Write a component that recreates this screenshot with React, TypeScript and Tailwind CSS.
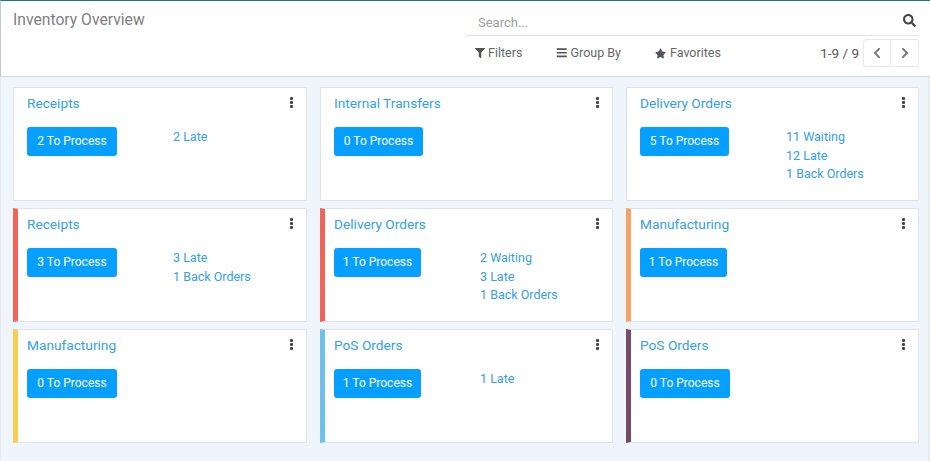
import React from "react";
import { FaFilter, FaBars, FaStar, FaSearch, FaChevronLeft, FaChevronRight } from "react-icons/fa";

const font = "font-['Roboto',sans-serif]";

const cards = [
  { title: "Receipts", button: "2 To Process", width: "w-[90px]", links: ["2 Late"], border: "" },
  { title: "Internal Transfers", button: "0 To Process", width: "w-[89px]", links: [], border: "" },
  { title: "Delivery Orders", button: "5 To Process", width: "w-[89px]", links: ["11 Waiting", "12 Late", "1 Back Orders"], border: "" },
  { title: "Receipts", button: "3 To Process", width: "w-[90px]", links: ["3 Late", "1 Back Orders"], border: "border-l-[#f0645a]" },
  { title: "Delivery Orders", button: "1 To Process", width: "w-[87px]", links: ["2 Waiting", "3 Late", "1 Back Orders"], border: "border-l-[#f0645a]" },
  { title: "Manufacturing", button: "1 To Process", width: "w-[87px]", links: [], border: "border-l-[#f4a460]" },
  { title: "Manufacturing", button: "0 To Process", width: "w-[90px]", links: [], border: "border-l-[#f7cd4f]" },
  { title: "PoS Orders", button: "1 To Process", width: "w-[87px]", links: ["1 Late"], border: "border-l-[#6cc1ed]" },
  { title: "PoS Orders", button: "0 To Process", width: "w-[90px]", links: [], border: "border-l-[#744a69]" },
];

const Kebab = () => (
  <div className="flex flex-col gap-[1px] w-[3.5px]">
    <span className="w-[3.5px] h-[3px] rounded-[1px] bg-[#444]"></span>
    <span className="w-[3.5px] h-[3px] rounded-[1px] bg-[#444]"></span>
    <span className="w-[3.5px] h-[3px] rounded-[1px] bg-[#444]"></span>
  </div>
);

const Card = ({ title, button, width, links, border }: any) => (
  <div
    className={`h-[114px] bg-white border border-[#dfe4ea] pr-[13px] pt-[9px] ${
      border ? `border-l-[5px] pl-[9px] ${border}` : "pl-[13px]"
    }`}
  >
    <div className="flex items-start justify-between h-[16px]">
      <div className="text-[13.7px] leading-[16px] -mt-[2px] text-[#35a0e4]">{title}</div>
      <Kebab />
    </div>
    <div className="flex mt-[14px]">
      <div className="w-[146px]">
        <button className={`h-[29px] ${width} rounded-[3px] bg-[#05a0ff] text-white text-[12px] leading-[29px] text-center`}>
          {button}
        </button>
      </div>
      <div className="flex flex-col text-[12.5px] leading-[18.5px] text-[#35a0e4] pt-[1px]">
        {links.map((l: string) => (
          <div key={l}>{l}</div>
        ))}
      </div>
    </div>
  </div>
);

export default function App() {
  return (
    <div className={`w-[930px] h-[461px] overflow-hidden bg-[#f0f5fb] ${font}`}>
      <div className="h-[77px] bg-white border-t border-t-[#1c6e9e] border-l border-l-[#c4c9ce] border-b border-b-[#d3d8dd] flex justify-between pl-[12px] pr-[11px]">
        <div className="text-[15.7px] leading-[18px] text-[#808080] pt-[10px]">Inventory Overview</div>
        <div className="w-[453px]">
          <div className="h-[35px] border-b border-[#dee2e6] flex justify-between pl-[12px] pr-[3px] text-[13px] text-[#a0a0a0]">
            <span className="pt-[13px] leading-[18px]">Search...</span>
            <FaSearch className="text-[13px] text-[#444] mt-[13px]" />
          </div>
          <div className="flex items-center h-[28px] mt-[3px] text-[12.5px] text-[#666]">
            <div className="flex items-center gap-[3px] pl-[9px] w-[90px]">
              <FaFilter className="text-[10px] text-[#555]" />
              <span>Filters</span>
            </div>
            <div className="flex items-center gap-[3px] w-[99px]">
              <FaBars className="text-[11.5px] text-[#555]" />
              <span>Group By</span>
            </div>
            <div className="flex items-center gap-[4px]">
              <FaStar className="text-[11px] text-[#555]" />
              <span>Favorites</span>
            </div>
            <span className="ml-auto mr-[4px] text-[13.5px] text-[#555]">1-9 / 9</span>
            <div className="w-[28px] h-[28px] border border-[#e6e8eb] rounded-l-[3px] flex items-center justify-center">
              <FaChevronLeft className="text-[12px] text-[#777]" />
            </div>
            <div className="w-[28px] h-[28px] border border-l-0 border-[#e6e8eb] rounded-r-[3px] flex items-center justify-center">
              <FaChevronRight className="text-[12px] text-[#777]" />
            </div>
          </div>
        </div>
      </div>
      <div className="h-[384px] border-l border-l-[#e3e9ee] border-r-2 border-r-[#e6ebee]">
        <div className="grid grid-cols-[294px_293px_293px] gap-x-[13px] gap-y-[7px] pl-[12px] pt-[10px]">
          {cards.map((c, i) => (
            <Card key={i} {...c} />
          ))}
        </div>
      </div>
    </div>
  );
}
